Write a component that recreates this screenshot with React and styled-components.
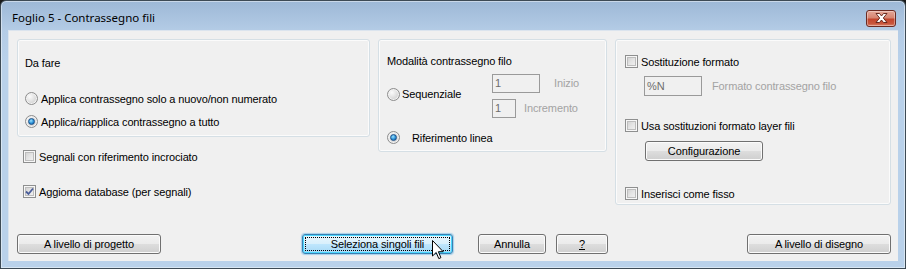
import styled, { createGlobalStyle, css } from 'styled-components';

const GlobalStyle = createGlobalStyle`
  html, body {
    margin: 0;
    padding: 0;
    background: #1a1a1a;
  }
  * {
    box-sizing: border-box;
  }
`;

const Window = styled.div`
  width: 906px;
  height: 269px;
  display: flex;
  flex-direction: column;
  border: 1px solid #3d4a55;
  border-radius: 6px 6px 0 0;
  background: linear-gradient(#9db8d7 0px, #b4cce6 30px, #b9d1ea 60px, #b9d1ea 100%);
  box-shadow: inset 0 0 0 1px rgba(255, 255, 255, 0.45);
  padding: 0 7px 7px 7px;
  font-family: 'Liberation Sans', Arial, sans-serif;
  font-size: 11px;
  letter-spacing: -0.12px;
  color: #000;
`;

const TitleBar = styled.div`
  height: 29px;
  padding: 5px 2px 0 4px;
  display: flex;
  align-items: center;
  justify-content: space-between;
`;

const Title = styled.span`
  font-family: 'Noto Sans', 'Open Sans', sans-serif;
  font-size: 11.5px;
  letter-spacing: 0;
  color: #000;
  line-height: 24px;
`;

const CloseButton = styled.div`
  width: 30px;
  height: 17px;
  border: 1px solid #6b2a22;
  border-radius: 3px;
  background: linear-gradient(#e4a798 0%, #d68572 45%, #c2452d 55%, #c9573d 85%, #dd8a74 100%);
  box-shadow: inset 0 0 0 1px rgba(255, 255, 255, 0.35);
  display: flex;
  align-items: center;
  justify-content: center;
`;

const Client = styled.div`
  flex: 1;
  display: flex;
  flex-direction: column;
  background: #f0f0f0;
  border: 1px solid #dbe4ee;
  border-width: 1px 0 0 1px;
  padding: 8px 7px 7px 8px;
`;

const TopArea = styled.div`
  display: grid;
  grid-template-columns: 353px 229px 1fr;
  column-gap: 8px;
  align-items: start;
`;

const Column = styled.div`
  display: flex;
  flex-direction: column;
`;

const Group = styled.div`
  height: ${({ $h }) => $h}px;
  border: 1px solid #d5dfe5;
  border-radius: 3px;
  box-shadow: inset 0 0 0 1px #fbfbfb;
  padding: ${({ $pad }) => $pad};
  display: flex;
  flex-direction: column;
`;

const Label = styled.div`
  line-height: 13px;
  height: 13px;
  white-space: nowrap;
  margin-top: ${({ $mt }) => $mt || 0}px;
  color: ${({ $disabled }) => ($disabled ? '#a3a3a3' : '#000')};
`;

const Row = styled.div`
  display: flex;
  align-items: center;
  height: 17px;
  white-space: nowrap;
  margin-top: ${({ $mt }) => $mt || 0}px;
  margin-left: ${({ $ml }) => $ml || 0}px;
  gap: ${({ $gap }) => ($gap === undefined ? 3 : $gap)}px;
`;

const Radio = styled.span`
  width: 13px;
  height: 13px;
  flex: none;
  border-radius: 50%;
  border: 1px solid #8d8d8d;
  background: radial-gradient(circle at 35% 32%, #fbfbfb 0%, #e2e2e2 45%, #c4c4c4 100%);
  box-shadow: inset 0 0 0 1px #f2f2f2;
  display: flex;
  align-items: center;
  justify-content: center;
  ${({ $on }) =>
    $on &&
    css`
      &::after {
        content: '';
        width: 5px;
        height: 5px;
        border-radius: 50%;
        border: 1px solid #1b4f87;
        background: radial-gradient(circle at 40% 35%, #9be3ff 0%, #2a8fd6 55%, #135a9c 100%);
      }
    `}
`;

const Check = styled.span`
  width: 13px;
  height: 13px;
  flex: none;
  border: 1px solid #8e8f8f;
  background: linear-gradient(135deg, #cbcbcb 0%, #e4e4e4 50%, #f6f6f6 100%);
  box-shadow: inset 0 0 0 1px #f7f7f7, inset 0 0 0 2px #bdbdbd;
  display: flex;
  align-items: center;
  justify-content: center;
`;

const TextBox = styled.div`
  width: ${({ $w }) => $w}px;
  height: ${({ $h }) => $h || 19}px;
  border: 1px solid #9a9a9a;
  background: #f0f0f0;
  color: #6d6d6d;
  padding-left: 2px;
  line-height: ${({ $h }) => ($h || 19) - 2}px;
  flex: none;
`;

const SeqBlock = styled.div`
  display: flex;
  align-items: center;
  margin-top: 6px;
`;

const SeqRadio = styled(Row)`
  width: 105px;
  margin-bottom: 4px;
`;

const Fields = styled.div`
  display: flex;
  flex-direction: column;
  gap: 6px;
`;

const FieldRow = styled.div`
  display: flex;
  align-items: center;
  gap: ${({ $gap }) => $gap}px;
  margin-top: ${({ $mt }) => $mt || 0}px;
  margin-left: ${({ $ml }) => $ml || 0}px;
`;

const ButtonRow = styled.div`
  margin-top: auto;
  display: flex;
  align-items: center;
`;

const Button = styled.div`
  position: relative;
  width: ${({ $w }) => $w}px;
  height: 20px;
  margin-left: ${({ $ml }) => $ml || 0}px;
  margin-top: ${({ $mt }) => $mt || 0}px;
  border: 1px solid #707070;
  border-radius: 3px;
  background: linear-gradient(#f2f2f2 0%, #ebebeb 48%, #dddddd 52%, #cfcfcf 100%);
  box-shadow: inset 0 0 0 1px #fbfbfb;
  display: flex;
  align-items: center;
  justify-content: center;
  white-space: nowrap;
  flex: none;
  ${({ $hot }) =>
    $hot &&
    css`
      border-color: #3c7fb1;
      background: linear-gradient(#eaf6fd 0%, #d9f0fc 48%, #bee6fd 52%, #a7d9f5 100%);
      box-shadow: inset 0 0 0 1px #48d6fd, 0 0 1px 1px rgba(72, 170, 230, 0.45);
      &::before {
        content: '';
        position: absolute;
        inset: 2px;
        border: 1px dotted #000;
      }
    `}
`;

const Underlined = styled.span`
  text-decoration: underline;
`;

const Cursor = styled.svg`
  position: absolute;
  left: 129px;
  top: 5px;
  overflow: visible;
`;

const CheckMark = () => (
  <svg width="9" height="9" viewBox="0 0 9 9">
    <path d="M1 4.5 L3.5 7 L8 1.5" fill="none" stroke="#4a5d9a" strokeWidth="1.8" />
  </svg>
);

const CloseGlyph = () => (
  <svg width="13" height="10" viewBox="0 0 13 10">
    <path
      d="M1 0.5 H4.5 L6.5 3 L8.5 0.5 H12 L8.3 5 L12 9.5 H8.5 L6.5 7 L4.5 9.5 H1 L4.7 5 Z"
      fill="#ffffff"
      stroke="#5a1d14"
      strokeWidth="0.9"
      strokeLinejoin="round"
    />
  </svg>
);

export default function App() {
  return (
    <>
      <GlobalStyle />
      <Window>
        <TitleBar>
          <Title>Foglio 5 - Contrassegno fili</Title>
          <CloseButton>
            <CloseGlyph />
          </CloseButton>
        </TitleBar>
        <Client>
          <TopArea>
            <Column>
              <Group $h={98} $pad="17px 7px 0 7px">
                <Label>Da fare</Label>
                <Row $mt={20}>
                  <Radio />
                  <span>Applica contrassegno solo a nuovo/non numerato</span>
                </Row>
                <Row $mt={6}>
                  <Radio $on />
                  <span>Applica/riapplica contrassegno a tutto</span>
                </Row>
              </Group>
              <Row $mt={11} $ml={6}>
                <Check />
                <span>Segnali con riferimento incrociato</span>
              </Row>
              <Row $mt={18} $ml={6}>
                <Check>
                  <CheckMark />
                </Check>
                <span>Aggioma database (per segnali)</span>
              </Row>
            </Column>

            <Group $h={113} $pad="15px 8px 0 8px">
              <Label>Modalità contrassegno filo</Label>
              <SeqBlock>
                <SeqRadio $gap={2}>
                  <Radio />
                  <span>Sequenziale</span>
                </SeqRadio>
                <Fields>
                  <FieldRow $gap={14}>
                    <TextBox $w={48}>1</TextBox>
                    <Label $disabled>Inizio</Label>
                  </FieldRow>
                  <FieldRow $gap={8}>
                    <TextBox $w={24}>1</TextBox>
                    <Label $disabled>Incremento</Label>
                  </FieldRow>
                </Fields>
              </SeqBlock>
              <Row $mt={11} $gap={12}>
                <Radio $on />
                <span>Riferimento linea</span>
              </Row>
            </Group>

            <Group $h={166} $pad="13px 9px 0 9px">
              <Row>
                <Check />
                <span>Sostituzione formato</span>
              </Row>
              <FieldRow $gap={10} $mt={6} $ml={19}>
                <TextBox $w={58} $h={20}>%N</TextBox>
                <Label $disabled>Formato contrassegno filo</Label>
              </FieldRow>
              <Row $mt={21}>
                <Check />
                <span>Usa sostituzioni formato layer fili</span>
              </Row>
              <Button $w={118} $ml={20} $mt={7}>
                Configurazione
              </Button>
              <Row $mt={24}>
                <Check />
                <span>Inserisci come fisso</span>
              </Row>
            </Group>
          </TopArea>

          <ButtonRow>
            <Button $w={144}>A livello di progetto</Button>
            <Button $w={151} $ml={141} $hot>
              Seleziona singoli fili
              <Cursor width="12" height="20" viewBox="0 0 12 20">
                <path
                  d="M0.5 0.5 L0.5 16 L4.2 12.5 L6.8 18.6 L8.9 17.7 L6.4 11.7 L11.2 11.7 Z"
                  fill="#ffffff"
                  stroke="#000000"
                  strokeWidth="1"
                  strokeLinejoin="miter"
                />
              </Cursor>
            </Button>
            <Button $w={68} $ml={25}>
              Annulla
            </Button>
            <Button $w={52} $ml={10}>
              <Underlined>?</Underlined>
            </Button>
            <Button $w={144} $ml={139}>
              A livello di disegno
            </Button>
          </ButtonRow>
        </Client>
      </Window>
    </>
  );
}
